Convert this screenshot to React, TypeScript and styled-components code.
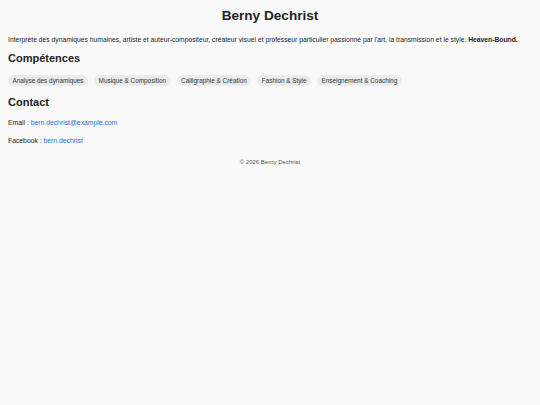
import React from "react";
import styled, { createGlobalStyle } from "styled-components";

const Global = createGlobalStyle`
  html, body { margin: 0; padding: 0; background: #fafafa; }
  body { font-family: "Liberation Sans", Arial, sans-serif; color: #222; }
`;

const Page = styled.div`
  padding: 7px 8px;
  font-size: 7px;
  line-height: 1.4;
`;

const Title = styled.h1`
  margin: 0;
  text-align: center;
  font-size: 13.6px;
  line-height: 18px;
  font-weight: 700;
  color: #222;
`;

const Intro = styled.p`
  margin: 10px 0 0;
  font-size: 6.75px;
  line-height: 10px;
`;

const SectionTitle = styled.h2`
  margin: 6px 0 0;
  font-size: 11px;
  line-height: 14px;
  font-weight: 700;
`;

const Tags = styled.div`
  display: flex;
  flex-wrap: wrap;
  gap: 6px;
  margin-top: 10px;
  margin-bottom: 9px;
`;

const Tag = styled.span`
  background: #ebebeb;
  border-radius: 6px;
  padding: 0 4.5px;
  font-size: 6.4px;
  line-height: 11px;
  color: #333;
`;

const Line = styled.p`
  margin: 9px 0 0;
  font-size: 6.8px;
  line-height: 9px;
`;

const Link = styled.a`
  color: #1f6fd6;
  text-decoration: none;
`;

const Footer = styled.footer`
  margin-top: 13px;
  text-align: center;
  font-size: 6px;
  color: #555;
`;

const skills = [
  "Analyse des dynamiques",
  "Musique & Composition",
  "Calligraphie & Création",
  "Fashion & Style",
  "Enseignement & Coaching",
];

export default function App() {
  return (
    <>
      <Global />
      <Page>
        <Title>Berny Dechrist</Title>
        <Intro>
          Interprète des dynamiques humaines, artiste et auteur-compositeur, créateur visuel et professeur
          particulier passionné par l'art, la transmission et le style. <strong>Heaven-Bound.</strong>
        </Intro>
        <SectionTitle>Compétences</SectionTitle>
        <Tags>
          {skills.map((s) => (
            <Tag key={s}>{s}</Tag>
          ))}
        </Tags>
        <SectionTitle>Contact</SectionTitle>
        <Line>
          Email : <Link href="#">bern.dechrist@example.com</Link>
        </Line>
        <Line>
          Facebook : <Link href="#">bern.dechrist</Link>
        </Line>
        <Footer>© 2026 Berny Dechrist</Footer>
      </Page>
    </>
  );
}
